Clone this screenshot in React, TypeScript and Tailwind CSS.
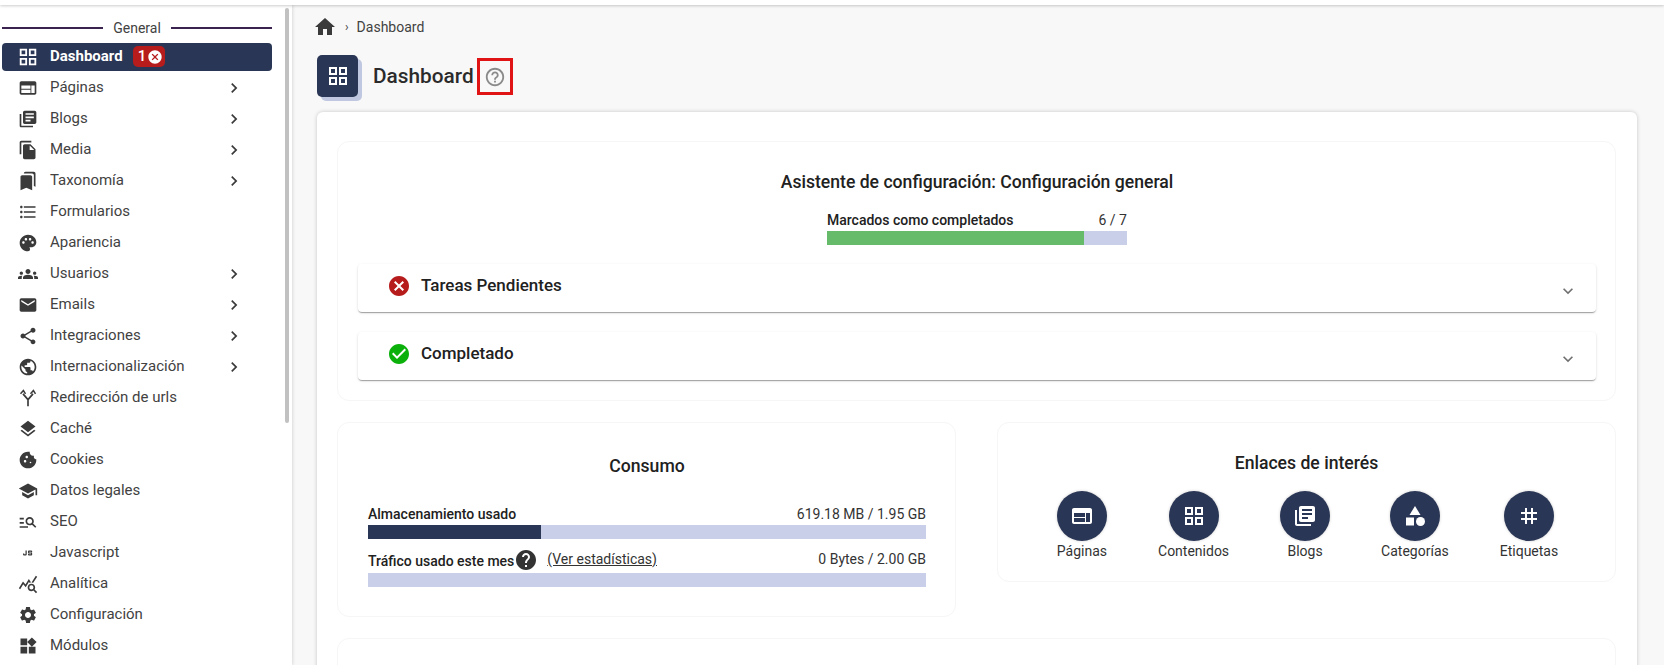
import React from "react";
import {
  MdGridView, MdWeb, MdLibraryBooks, MdFileCopy, MdBookmarks, MdFormatListBulleted, MdPalette, MdGroups, MdEmail, MdShare, MdPublic, MdLayers, MdCookie, MdSchool, MdManageSearch, MdJavascript, MdQueryStats, MdSettings, MdWidgets, MdHome, MdHelpOutline, MdHelp, MdCancel, MdCheckCircle, MdCategory, MdTag, MdExpandMore, MdKeyboardArrowRight,
} from "react-icons/md";

function RedirectIcon({ size = 20, className = "" }: { size?: number; className?: string }) {
  return (
    <svg width={size} height={size} viewBox="0 0 24 24" fill="none" stroke="currentColor" strokeWidth="2" className={className}>
      <path d="M12 22v-8L6 7M12 14l6-7" />
      <path d="M3 7l3.5-4L9 7M15 7l3.5-4L21 7" strokeWidth="1.8" />
    </svg>
  );
}

const menu: [string, React.ComponentType<any>, boolean][] = [
  ["Páginas", MdWeb, true],
  ["Blogs", MdLibraryBooks, true],
  ["Media", MdFileCopy, true],
  ["Taxonomía", MdBookmarks, true],
  ["Formularios", MdFormatListBulleted, false],
  ["Apariencia", MdPalette, false],
  ["Usuarios", MdGroups, true],
  ["Emails", MdEmail, true],
  ["Integraciones", MdShare, true],
  ["Internacionalización", MdPublic, true],
  ["Redirección de urls", RedirectIcon, false],
  ["Caché", MdLayers, false],
  ["Cookies", MdCookie, false],
  ["Datos legales", MdSchool, false],
  ["SEO", MdManageSearch, false],
  ["Javascript", MdJavascript, false],
  ["Analítica", MdQueryStats, false],
  ["Configuración", MdSettings, false],
  ["Módulos", MdWidgets, false],
];

const links: [string, React.ComponentType<any>][] = [
  ["Páginas", MdWeb],
  ["Contenidos", MdGridView],
  ["Blogs", MdLibraryBooks],
  ["Categorías", MdCategory],
  ["Etiquetas", MdTag],
];

function Sidebar() {
  return (
    <aside className="flex w-[292px] shrink-0 bg-white shadow-[1px_0_3px_rgba(0,0,0,0.12)]">
      <div className="w-[285px] shrink-0">
        <div className="flex h-[36px] w-[272px] items-center gap-[10px] pl-[2px] pt-[10px] text-[14px] text-[#424242]">
          <div className="h-[2px] flex-1 bg-[#3b2350]" />
          <span className="leading-none">General</span>
          <div className="h-[2px] flex-1 bg-[#3b2350]" />
        </div>
        <div className="flex h-[31px] items-center">
          <div className="ml-[2px] flex h-[28px] w-[270px] items-center rounded-[4px] bg-[#2a3655] pl-[15px] text-white">
            <MdGridView size={22} className="mr-[11px]" />
            <span className="text-[15px] font-bold">Dashboard</span>
            <span className="ml-[10px] flex h-[21px] w-[32px] items-center rounded-[5px] bg-[#b71c1c] pl-[5px] text-[15px] font-medium">
              1
              <MdCancel size={16} className="ml-[1px]" />
            </span>
          </div>
        </div>
        {menu.map(([label, Icon, arrow]) => (
          <div key={label} className="flex h-[31px] w-[272px] items-center pl-[18px] text-[15px] text-[#424242]">
            <Icon size={20} className="mr-[12px] shrink-0 text-[#3a3a3a]" />
            <span className="w-[174px]">{label}</span>
            {arrow && <MdKeyboardArrowRight size={20} className="text-[#3a3a3a]" />}
          </div>
        ))}
      </div>
      <div className="mt-[3px] h-[415px] w-[4px] rounded-[2px] bg-[#c1c1c1]" />
    </aside>
  );
}

function Accordion({ icon, label, className = "" }: { icon: React.ReactNode; label: string; className?: string }) {
  return (
    <div className={`flex h-[48px] items-center justify-between rounded-[4px] bg-white pl-[29px] pr-[18px] shadow-[0_2px_1px_-1px_rgba(0,0,0,0.2),0_1px_1px_rgba(0,0,0,0.14),0_1px_3px_rgba(0,0,0,0.12)] ${className}`}>
      <div className="mb-[5px] flex items-center gap-[10px] text-[17px] font-medium text-[#212121]">
        {icon}
        <span>{label}</span>
      </div>
      <MdExpandMore size={20} className="mt-[6px] text-[#707070]" />
    </div>
  );
}

function Bar({ value }: { value: number }) {
  return (
    <div className="h-[14px] w-full bg-[#c9cfe8]">
      <div className="h-full bg-[#2a3655]" style={{ width: `${value}%` }} />
    </div>
  );
}

export default function App() {
  return (
    <div className="flex h-[665px] w-[1664px] flex-col overflow-hidden bg-[#f8f8f8] [font-family:Roboto,sans-serif]">
      <div className="z-10 h-[5px] shrink-0 bg-white shadow-[0_1px_3px_rgba(0,0,0,0.2)]" />
      <div className="flex min-h-0 flex-1">
        <Sidebar />
        <main className="min-w-0 flex-1 pl-[25px] pr-[27px]">
          <div className="flex h-[32px] items-center pt-[12px] text-[14px] text-[#424242]">
            <MdHome size={24} className="-ml-[4px] text-[#3a3a3a]" />
            <span className="ml-[8px] text-[12px]">›</span>
            <span className="ml-[8px]">Dashboard</span>
          </div>
          <div className="mt-[18px] flex h-[46px] items-start">
            <div className="flex h-[42px] w-[41px] items-center justify-center rounded-[5px] bg-[#2a3655] text-white shadow-[4px_4px_0_#bfc8e0]">
              <MdGridView size={24} />
            </div>
            <h1 className="ml-[15px] mt-[7px] text-[20.8px] font-medium leading-[28px] text-[#2b2b2b]">Dashboard</h1>
            <div className="ml-[3px] mt-[3px] flex h-[37px] w-[36px] items-center justify-center border-[3px] border-[#e01414]">
              <MdHelpOutline size={22} className="text-[#8a8a8a]" />
            </div>
          </div>
          <div className="mt-[11px] h-[600px] rounded-[6px] bg-white pl-[20px] pr-[21px] pt-[29px] shadow-[0_0_4px_rgba(0,0,0,0.2)]">
            <section className="h-[260px] rounded-[12px] border border-[#f6f6f6] pl-[20px] pr-[19px] pt-[28px]">
              <h2 className="text-center text-[17.6px] font-medium leading-[24px] text-[#212121]">Asistente de configuración: Configuración general</h2>
              <div className="mx-auto mt-[15px] w-[300px]">
                <div className="flex h-[22px] items-center justify-between text-[14px] text-[#333]">
                  <span className="font-medium text-[#212121]">Marcados como completados</span>
                  <span>6 / 7</span>
                </div>
                <div className="h-[14px] bg-[#c9cfe8]">
                  <div className="h-full bg-[#66bb6a]" style={{ width: `${(6 / 7) * 100}%` }} />
                </div>
              </div>
              <Accordion className="mt-[19px]" label="Tareas Pendientes" icon={<MdCancel size={24} className="text-[#b71c1c]" />} />
              <Accordion className="mt-[20px]" label="Completado" icon={<MdCheckCircle size={24} className="text-[#0bb00b]" />} />
            </section>
            <div className="mt-[21px] flex items-start gap-[41px]">
              <section className="h-[195px] w-[619px] shrink-0 rounded-[12px] border border-[#f6f6f6] pl-[30px] pr-[29px] pt-[31px]">
                <h2 className="text-center text-[17.6px] font-medium leading-[24px] text-[#212121]">Consumo</h2>
                <div className="mt-[26px] flex h-[21px] items-center justify-between text-[14px] text-[#333]">
                  <span className="font-medium text-[#212121]">Almacenamiento usado</span>
                  <span>619.18 MB / 1.95 GB</span>
                </div>
                <Bar value={31} />
                <div className="mt-[7px] flex h-[27px] items-center justify-between text-[14px] text-[#333]">
                  <span className="flex items-center">
                    <span className="mt-[3px] font-medium text-[#212121]">Tráfico usado este mes</span>
                    <MdHelp size={24} className="text-[#333]" />
                    <span className="ml-[9px] underline">(Ver estadísticas)</span>
                  </span>
                  <span>0 Bytes / 2.00 GB</span>
                </div>
                <Bar value={0} />
              </section>
              <section className="h-[160px] flex-1 rounded-[12px] border border-[#f6f6f6] pt-[28px]">
                <h2 className="text-center text-[17.6px] font-medium leading-[24px] text-[#212121]">Enlaces de interés</h2>
                <div className="mt-[16px] flex justify-center gap-[51px] pl-[2px]">
                  {links.map(([label, Icon]) => (
                    <div key={label} className="flex flex-col items-center text-[14px] text-[#333]">
                      <div className="flex h-[50px] w-[50px] items-center justify-center rounded-full bg-[#2a3655] text-white shadow-[0_0_3px_rgba(0,0,0,0.2)]">
                        <Icon size={24} />
                      </div>
                      <span className="leading-[20px]">{label}</span>
                    </div>
                  ))}
                </div>
              </section>
            </div>
            <section className="mt-[21px] h-[200px] rounded-[12px] border border-[#f6f6f6]" />
          </div>
        </main>
      </div>
    </div>
  );
}
